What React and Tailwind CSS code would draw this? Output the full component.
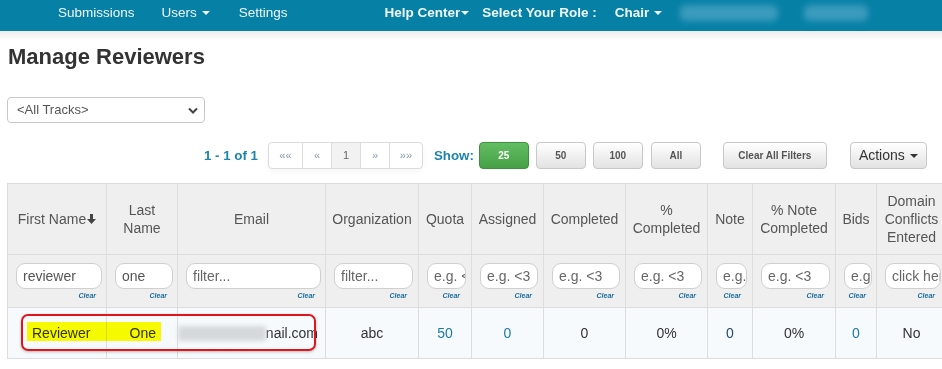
import React from "react"

const Caret = () => (
    <span className="ml-[5px] inline-block w-0 h-0 border-x-[4px] border-t-[4px] border-x-transparent border-t-current align-middle" />
)

const cols = [
    { label: "First Name", w: "w-[99px]", arrow: true, filter: "reviewer", fw: "w-[86px]" },
    { label: <>Last<br />Name</>, w: "w-[71px]", filter: "one", fw: "w-[58px]" },
    { label: "Email", w: "w-[148px]", ph: "filter...", fw: "w-[135px]" },
    { label: "Organization", w: "w-[93px]", ph: "filter...", fw: "w-[79px]" },
    { label: "Quota", w: "w-[53px]", ph: "e.g. <3", fw: "w-[39px]" },
    { label: "Assigned", w: "w-[72px]", ph: "e.g. <3", fw: "w-[58px]" },
    { label: "Completed", w: "w-[82px]", ph: "e.g. <3", fw: "w-[68px]" },
    { label: <>%<br />Completed</>, w: "w-[82px]", ph: "e.g. <3", fw: "w-[68px]" },
    { label: "Note", w: "w-[45px]", ph: "e.g. <3", fw: "w-[31px]" },
    { label: <>% Note<br />Completed</>, w: "w-[83px]", ph: "e.g. <3", fw: "w-[69px]" },
    { label: "Bids", w: "w-[41px]", ph: "e.g. <3", fw: "w-[28px]" },
    { label: <>Domain<br />Conflicts<br />Entered</>, w: "w-[70px]", ph: "click here", fw: "w-[56px]" },
]

const sizeBtn = "h-[27px] rounded-[4px] border border-[#c8c8c8] bg-gradient-to-b from-white to-[#e2e2e2] text-[10px] font-bold text-[#555] shadow-[inset_0_1px_0_rgba(255,255,255,0.5)]"

export default function App() {
    return (
        <div className="w-[942px] h-[369px] overflow-hidden bg-white font-['Liberation_Sans',Arial,sans-serif] text-[#333]">
            {/* top nav */}
            <div className="h-[31px] bg-[#0780a6] flex items-start pt-[4px] leading-[17px] text-[13.5px] text-[#eef6f9]">
                <span className="ml-[58px]">Submissions</span>
                <span className="ml-[27px] flex items-center">Users<Caret /></span>
                <span className="ml-[29px]">Settings</span>
                <span className="ml-[97px] font-bold flex items-center">Help Center<span className="ml-[1px] inline-block w-0 h-0 border-x-[4px] border-t-[4px] border-x-transparent border-t-current" /></span>
                <span className="ml-[13px] font-bold">Select Your Role :</span>
                <span className="ml-[18px] font-bold flex items-center">Chair<Caret /></span>
                <span className="ml-[18px] mt-[1px] h-[16px] w-[98px] rounded-[6px] bg-[#3a9bbd] blur-[3px]" />
                <span className="ml-[26px] mt-[1px] h-[16px] w-[64px] rounded-[6px] bg-[#3a9bbd] blur-[3px]" />
            </div>
            <div className="h-[10px] bg-gradient-to-b from-[#ececec] to-white" />

            <h1 className="ml-[8px] mt-[4px] text-[22px] font-bold leading-[24px] text-[#333]">Manage Reviewers</h1>

            <div className="ml-[7px] mt-[28px] w-[198px] h-[26px] rounded-[4px] border border-[#c9c9c9] flex items-center justify-between pl-[9px] pr-[6px] text-[13px] text-[#555]">
                <span>&lt;All Tracks&gt;</span>
                <svg width="10" height="7" viewBox="0 0 10 7"><path d="M1 1.5 L5 5.5 L9 1.5" fill="none" stroke="#444" strokeWidth="2" /></svg>
            </div>

            {/* pager / toolbar */}
            <div className="mt-[19px] h-[27px] flex items-center">
                <span className="ml-[204px] text-[13.3px] font-bold text-[#1c84ad]">1 - 1 of 1</span>
                <div className="ml-[10px] h-[27px] flex rounded-[4px] border border-[#dcdcdc] bg-white text-[11px] text-[#8a9aa4] shadow-[0_3px_6px_rgba(0,0,0,0.04)]">
                    <span className="w-[34px] flex items-center justify-center border-r border-[#dcdcdc]">««</span>
                    <span className="w-[29px] flex items-center justify-center border-r border-[#dcdcdc]">«</span>
                    <span className="w-[29px] flex items-center justify-center border-r border-[#dcdcdc] bg-[#f2f2f2] text-[#666]">1</span>
                    <span className="w-[29px] flex items-center justify-center border-r border-[#dcdcdc]">»</span>
                    <span className="w-[32px] flex items-center justify-center">»»</span>
                </div>
                <span className="ml-[11px] text-[13.3px] font-bold text-[#1c84ad]">Show:</span>
                <button className="ml-[5px] w-[50px] h-[27px] rounded-[4px] border border-[#3f8f3f] bg-gradient-to-b from-[#63bd63] to-[#46a046] text-[10px] font-bold text-white">25</button>
                <button className={`ml-[7px] w-[50px] ${sizeBtn}`}>50</button>
                <button className={`ml-[7px] w-[50px] ${sizeBtn}`}>100</button>
                <button className={`ml-[8px] w-[50px] ${sizeBtn}`}>All</button>
                <button className={`ml-[22px] w-[104px] ${sizeBtn}`}>Clear All Filters</button>
                <button className="ml-[23px] w-[77px] h-[27px] rounded-[4px] border border-[#c8c8c8] bg-gradient-to-b from-white to-[#e2e2e2] text-[14px] text-[#333] flex items-center justify-center">Actions<Caret /></button>
            </div>

            {/* reviewers table */}
            <div className="relative mt-[14px] ml-[7px]">
                <table className="table-fixed border-collapse w-[939px] text-[14px]">
                    <thead>
                        <tr className="h-[71px] bg-[#efefef]">
                            {cols.map((c, i) => (
                                <th key={i} className={`${c.w} border border-[#dddddd] px-[4px] font-normal text-[#555] leading-[18px] text-center align-middle`}>
                                    {c.arrow ? (
                                        <span className="inline-flex items-center">
                                            {c.label}
                                            <svg width="9" height="10" viewBox="0 0 9 10" className="ml-[1px]"><path d="M3 0 H6 V5 H9 L4.5 10 L0 5 H3 Z" fill="#444" /></svg>
                                        </span>
                                    ) : c.label}
                                </th>
                            ))}
                        </tr>
                        <tr className="h-[53px] bg-[#efefef]">
                            {cols.map((c, i) => (
                                <td key={i} className="border border-[#dddddd] pl-[8px] pr-[5px] pt-[8px] pb-[6px] align-top">
                                    <div className={`${c.fw} h-[26px] rounded-[9px] border border-[#cfcfcf] bg-white flex items-center pl-[6px] overflow-hidden whitespace-nowrap text-[14px] text-[#555]`}>
                                        {c.filter ? c.filter : <span className="text-[#666]">{c.ph}</span>}
                                    </div>
                                    <div className={`${c.fw} mt-[2px] text-right pr-[6px] text-[7px] font-bold italic leading-[10px] text-[#1b6d9c]`}>Clear</div>
                                </td>
                            ))}
                        </tr>
                    </thead>
                    <tbody>
                        <tr className="h-[51px] bg-[#f6fafd] text-center">
                            <td className="border border-[#dddddd] text-left pl-[24px]">Reviewer</td>
                            <td className="border border-[#dddddd] text-right pr-[21px]">One</td>
                            <td className="border border-[#dddddd] pr-[7px]">
                                <div className="flex items-center justify-end">
                                    <span className="h-[15px] w-[90px] bg-[#d6d9dc] blur-[2px]" />
                                    <span>nail.com</span>
                                </div>
                            </td>
                            <td className="border border-[#dddddd]">abc</td>
                            <td className="border border-[#dddddd] text-[#1c7aa6]">50</td>
                            <td className="border border-[#dddddd] text-[#1c7aa6]">0</td>
                            <td className="border border-[#dddddd]">0</td>
                            <td className="border border-[#dddddd]">0%</td>
                            <td className="border border-[#dddddd] text-[#24496e]">0</td>
                            <td className="border border-[#dddddd]">0%</td>
                            <td className="border border-[#dddddd] text-[#1c7aa6]">0</td>
                            <td className="border border-[#dddddd]">No</td>
                        </tr>
                    </tbody>
                </table>
                {/* highlighter + red annotation over the first row */}
                <div className="absolute left-[20px] top-[139px] w-[134px] h-[19px] bg-[#ffff00] mix-blend-multiply" />
                <div className="absolute left-[14px] top-[131px] w-[295px] h-[37px] rounded-[7px] border-2 border-[#e0141c] shadow-[0_1px_3px_rgba(0,0,0,0.25)]" />
            </div>
        </div>
    )
}
